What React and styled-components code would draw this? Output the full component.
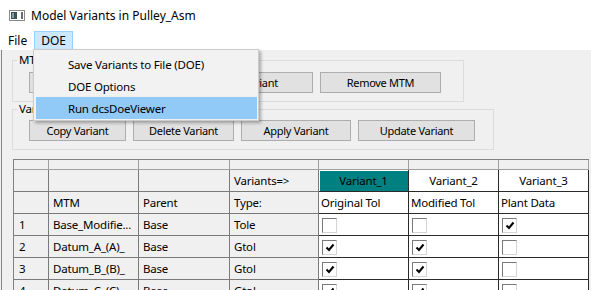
import React from 'react';
import styled, { createGlobalStyle } from 'styled-components';

const GlobalStyle = createGlobalStyle`
html, body {
  margin: 0;
  padding: 0;
  background: #f0f0f0;
}
body {
  font-family: "Noto Sans", "DejaVu Sans", sans-serif;
  font-size: 12px;
  color: #000;
}
`

const Window = styled.div`
position: relative;
width: 591px;
height: 290px;
overflow: hidden;
background: #f0f0f0;
display: flex;
flex-direction: column;`

const TitleBar = styled.div`
flex: 0 0 31px;
background: #fff;
display: flex;
align-items: center;
padding-left: 9px;
gap: 6px;
font-size: 12px;`

const MenuBar = styled.div`
flex: 0 0 18px;
background: #fff;
display: flex;
padding-left: 1px;`

const MenuItem = styled.div`
display: flex;
align-items: center;
padding: 0 6px;
border: 1px solid ${p => (p.$open ? '#99d1ff' : 'transparent')};
background: ${p => (p.$open ? '#cce8ff' : 'transparent')};
font-size: 12px;`

const Body = styled.div`
flex: 1 1 auto;
min-height: 0;
overflow: hidden;
margin-left: 1px;
border-left: 1px solid #858585;
padding-left: 10px;
display: flex;
flex-direction: column;
align-items: flex-start;`

const Group = styled.fieldset`
flex-shrink: 0;
margin: ${p => p.$mt}px 0 0 0;
padding: ${p => p.$pt}px 0 8px 0;
width: ${p => p.$width}px;
box-sizing: border-box;
min-width: 0;
border: 1px solid #dcdcdc;`

const Legend = styled.legend`
margin-left: 4px;
padding: 0 2px;
line-height: 12px;
font-size: 11.5px;
letter-spacing: -0.2px;`

const ButtonRow = styled.div`
display: flex;
gap: 7px;
padding-left: 16px;`

const Button = styled.div`
width: ${p => p.$w}px;
height: 21px;
box-sizing: border-box;
display: flex;
align-items: center;
justify-content: center;
background: #e1e1e1;
border: 1px solid #adadad;
font-size: 11px;
letter-spacing: -0.3px;
white-space: nowrap;`

const Table = styled.div`
flex-shrink: 0;
margin: 9px 0 0 1px;
display: grid;
grid-template-columns: 35px 90px 91px 89px 90px 90px 90px;
grid-template-rows: 10px repeat(6, 22px);
border-left: 1px solid #808080;
border-top: 1px solid #808080;`

const cellBg = { gray: '#f0f0f0', white: '#fff', teal: '#008080' };
const cellLine = { gray: '#7a7a7a', white: '#2a2a2a', teal: '#2a2a2a', head: '#a0a0a0' };

const Cell = styled.div`
box-sizing: border-box;
display: flex;
align-items: center;
justify-content: ${p => (p.$center ? 'center' : 'flex-start')};
padding-left: ${p => (p.$center ? 0 : p.$pad ?? 4)}px;
background: ${p => cellBg[p.$bg]};
border-right: 1px solid ${p => cellLine[p.$line || p.$bg]};
border-bottom: 1px solid ${p => cellLine[p.$line || p.$bg]};
box-shadow: ${p => (p.$bg === 'teal' ? 'inset 1px 1px 0 #fff' : 'none')};
font-size: 11.5px;
letter-spacing: -0.2px;
white-space: nowrap;
overflow: hidden;`

const Box = styled.span`
width: 15px;
height: 15px;
box-sizing: border-box;
margin-left: 3px;
margin-top: 1px;
display: flex;
align-items: center;
justify-content: center;
background: #fff;
border-top: 1px solid #7a7a7a;
border-left: 1px solid #7a7a7a;
border-right: 1px solid #d4d4d4;
border-bottom: 1px solid #d4d4d4;`

const DropMenu = styled.div`
position: absolute;
left: 33px;
top: 49px;
width: 226px;
box-sizing: border-box;
padding: 3px 1px 1px 2px;
background: #f2f2f2;
border: 1px solid #cccccc;
box-shadow: 2px 2px 3px rgba(0, 0, 0, 0.3);`

const DropItem = styled.div`
height: 22px;
display: flex;
align-items: center;
padding-left: 32px;
background: ${p => (p.$hot ? '#91c9f7' : 'transparent')};
font-size: 11.5px;
letter-spacing: -0.2px;`

const AppIcon = () => (
  <svg width="16" height="11" viewBox="0 0 16 11">
    <rect x="0.5" y="0.5" width="15" height="10" fill="#fff" stroke="#8a8a8a" />
    <rect x="2" y="2" width="6" height="7" fill="#3d5358" />
    <rect x="3" y="3" width="2" height="5" fill="#7fa1a8" />
    <rect x="12" y="2" width="2" height="7" fill="#6a6a6a" />
  </svg>
);

const Check = ({ on }) => (
  <Box>
    {on && (
      <svg width="10" height="9" viewBox="0 0 10 9">
        <path d="M1.5 4.5 L4 7 L8.5 1.5" fill="none" stroke="#000" strokeWidth="2" />
      </svg>
    )}
  </Box>
);

const rows = [
  { n: '1', mtm: 'Base_Modifie...', parent: 'Base', type: 'Tole', v: [false, false, true] },
  { n: '2', mtm: 'Datum_A_(A)_', parent: 'Base', type: 'Gtol', v: [true, true, false] },
  { n: '3', mtm: 'Datum_B_(B)_', parent: 'Base', type: 'Gtol', v: [true, true, false] },
  { n: '4', mtm: 'Datum_C_(C)_', parent: 'Base', type: 'Gtol', v: [true, true, false] },
];

export default function App() {
  return (
    <Window>
      <GlobalStyle />
      <TitleBar>
        <AppIcon />
        <span>Model Variants in Pulley_Asm</span>
      </TitleBar>
      <MenuBar>
        <MenuItem>File</MenuItem>
        <MenuItem $open>DOE</MenuItem>
      </MenuBar>
      <Body>
        <Group $width={452} $mt={4} $pt={6}>
          <Legend>MTM</Legend>
          <ButtonRow>
            <Button $w={97}>Add MTM</Button>
            <Button $w={180}>Assign MTM to Variant</Button>
            <Button $w={121}>Remove MTM</Button>
          </ButtonRow>
        </Group>
        <Group $width={482} $mt={1} $pt={5}>
          <Legend>Variants</Legend>
          <ButtonRow>
            <Button $w={97}>Copy Variant</Button>
            <Button $w={101}>Delete Variant</Button>
            <Button $w={110}>Apply Variant</Button>
            <Button $w={117}>Update Variant</Button>
          </ButtonRow>
        </Group>
        <Table>
          {Array.from({ length: 7 }).map((_, i) => (
            <Cell key={'h' + i} $bg="gray" $line="head" />
          ))}

          <Cell $bg="gray" />
          <Cell $bg="gray" />
          <Cell $bg="gray" />
          <Cell $bg="gray">Variants=&gt;</Cell>
          <Cell $bg="teal" $center>Variant_1</Cell>
          <Cell $bg="white" $center>Variant_2</Cell>
          <Cell $bg="white" $center>Variant_3</Cell>

          <Cell $bg="gray" />
          <Cell $bg="gray">MTM</Cell>
          <Cell $bg="gray">Parent</Cell>
          <Cell $bg="gray">Type:</Cell>
          <Cell $bg="white" $pad={2}>Original Tol</Cell>
          <Cell $bg="white" $pad={2}>Modified Tol</Cell>
          <Cell $bg="white" $pad={2}>Plant Data</Cell>

          {rows.map(r => (
            <React.Fragment key={r.n}>
              <Cell $bg="gray" $pad={5}>{r.n}</Cell>
              <Cell $bg="gray">{r.mtm}</Cell>
              <Cell $bg="gray">{r.parent}</Cell>
              <Cell $bg="gray">{r.type}</Cell>
              {r.v.map((on, k) => (
                <Cell key={k} $bg="white" $pad={0}>
                  <Check on={on} />
                </Cell>
              ))}
            </React.Fragment>
          ))}
        </Table>
      </Body>
      <DropMenu>
        <DropItem>Save Variants to File (DOE)</DropItem>
        <DropItem>DOE Options</DropItem>
        <DropItem $hot>Run dcsDoeViewer</DropItem>
      </DropMenu>
    </Window>
  );
}
